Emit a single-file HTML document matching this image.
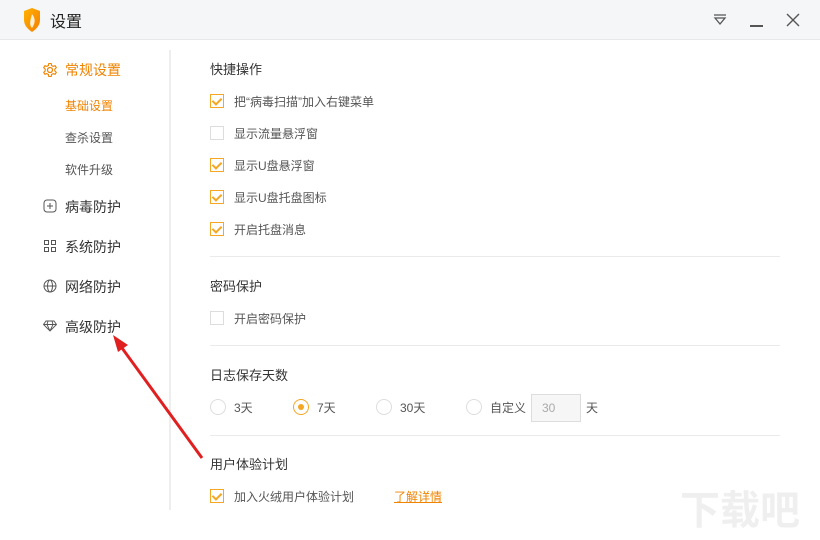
<!DOCTYPE html>
<html><head><meta charset="utf-8"><style>
*{margin:0;padding:0;box-sizing:border-box}
body{width:820px;height:540px;background:#fff;font-family:"Liberation Sans","Noto Sans CJK SC",sans-serif;position:relative;overflow:hidden;color:#333}
.a{position:absolute;white-space:nowrap}
.tb{position:absolute;left:0;top:0;width:820px;height:40px;background:#f5f6f7;border-bottom:1px solid #e8e8e8}
.cb{position:absolute;width:14px;height:14px;border:1px solid #ddd;background:#fff}
.cb.on{border-color:#f5a623}
.cb.on:after{content:"";position:absolute;left:3px;top:1px;width:4px;height:7px;border:solid #f5a623;border-width:0 2px 2px 0;transform:rotate(45deg)}
.lb{font-size:12px;color:#555}
.h{font-size:13px;color:#333}
.sep{position:absolute;left:210px;width:570px;height:1px;background:#eaeaea}
.rd{position:absolute;width:16px;height:16px;border:1px solid #ddd;border-radius:50%}
.rd.on{border-color:#f5a623}
.rd.on:after{content:"";position:absolute;left:4px;top:4px;width:6px;height:6px;border-radius:50%;background:#f5a623}
.side{font-size:14px;color:#333}
.sub{font-size:12px;color:#555}
</style></head><body>
<div class="tb"></div>
<svg class="a" style="left:22px;top:8px" width="20" height="24" viewBox="0 0 20 24"><defs><linearGradient id="g" x1="0" y1="0" x2="1" y2="1"><stop offset="0" stop-color="#ffb300"/><stop offset="1" stop-color="#f57c00"/></linearGradient></defs><path d="M2 3 L10 0 L18 3 L18 12 C18 18 13 22 10 24 C7 22 2 18 2 12Z" fill="url(#g)"/><path d="M10 6 C13 10 14 14 10 20 C7 17 8 13 10 6Z" fill="#fff" opacity=".85"/></svg>
<div class="a" style="left:50px;top:8px;font-size:16px;color:#222">设置</div>
<svg class="a" style="left:712px;top:13px" width="16" height="14"><path d="M2 2H14M3 5L8 11L13 5Z" stroke="#555" fill="none" stroke-width="1.3"/></svg>
<div class="a" style="left:750px;top:25px;width:13px;height:1.5px;background:#555"></div>
<svg class="a" style="left:786px;top:13px" width="14" height="14"><path d="M1 1L13 13M13 1L1 13" stroke="#555" stroke-width="1.4"/></svg>

<div class="a" style="left:169px;top:50px;width:2px;height:460px;background:#eeeeee"></div>
<svg class="a" style="left:42px;top:62px" width="16" height="16" viewBox="0 0 16 16"><circle cx="8" cy="8" r="2.5" fill="none" stroke="#f08300" stroke-width="1.3"/><path d="M6.8 1.5h2.4l.4 2 1.6.9 1.9-.7 1.2 2-1.5 1.4v1.8l1.5 1.4-1.2 2-1.9-.7-1.6.9-.4 2H6.8l-.4-2-1.6-.9-1.9.7-1.2-2 1.5-1.4V7.1L1.7 5.7l1.2-2 1.9.7 1.6-.9z" fill="none" stroke="#f08300" stroke-width="1.1"/></svg>
<div class="a side" style="left:65px;top:60px;color:#f08300">常规设置</div>
<div class="a sub" style="left:65px;top:97px;color:#f08300">基础设置</div>
<div class="a sub" style="left:65px;top:129px">查杀设置</div>
<div class="a sub" style="left:65px;top:161px">软件升级</div>
<svg class="a" style="left:43px;top:199px" width="14" height="14"><rect x="1" y="1" width="12" height="12" rx="3" fill="none" stroke="#555"/><path d="M7 4v6M4 7h6" stroke="#555"/></svg>
<div class="a side" style="left:65px;top:197px">病毒防护</div>
<svg class="a" style="left:43px;top:239px" width="14" height="14"><path d="M1.5 1.5h4v4h-4zM8.5 1.5h4v4h-4zM1.5 8.5h4v4h-4zM8.5 8.5h4v4h-4z" fill="none" stroke="#555"/></svg>
<div class="a side" style="left:65px;top:237px">系统防护</div>
<svg class="a" style="left:43px;top:279px" width="14" height="14"><circle cx="7" cy="7" r="6" fill="none" stroke="#555"/><ellipse cx="7" cy="7" rx="2.5" ry="6" fill="none" stroke="#555"/><path d="M1 7h12" stroke="#555"/></svg>
<div class="a side" style="left:65px;top:277px">网络防护</div>
<svg class="a" style="left:43px;top:320px" width="14" height="12"><path d="M3 1h8l2.5 3.5L7 11 .5 4.5zM.5 4.5h13M5 1L4 4.5 7 11M9 1l1 3.5L7 11" fill="none" stroke="#555" stroke-width=".9"/></svg>
<div class="a side" style="left:65px;top:317px">高级防护</div>

<div class="a h" style="left:210px;top:59px">快捷操作</div>
<div class="cb on" style="left:210px;top:94px"></div><div class="a lb" style="left:234px;top:93px">把“病毒扫描”加入右键菜单</div>
<div class="cb" style="left:210px;top:126px"></div><div class="a lb" style="left:234px;top:125px">显示流量悬浮窗</div>
<div class="cb on" style="left:210px;top:158px"></div><div class="a lb" style="left:234px;top:157px">显示U盘悬浮窗</div>
<div class="cb on" style="left:210px;top:190px"></div><div class="a lb" style="left:234px;top:189px">显示U盘托盘图标</div>
<div class="cb on" style="left:210px;top:222px"></div><div class="a lb" style="left:234px;top:221px">开启托盘消息</div>
<div class="sep" style="top:256px"></div>
<div class="a h" style="left:210px;top:276px">密码保护</div>
<div class="cb" style="left:210px;top:311px"></div><div class="a lb" style="left:234px;top:310px">开启密码保护</div>
<div class="sep" style="top:345px"></div>
<div class="a h" style="left:210px;top:365px">日志保存天数</div>
<div class="rd" style="left:210px;top:399px"></div><div class="a lb" style="left:234px;top:399px">3天</div>
<div class="rd on" style="left:293px;top:399px"></div><div class="a lb" style="left:317px;top:399px">7天</div>
<div class="rd" style="left:376px;top:399px"></div><div class="a lb" style="left:400px;top:399px">30天</div>
<div class="rd" style="left:466px;top:399px"></div><div class="a lb" style="left:490px;top:399px">自定义</div>
<div class="a" style="left:531px;top:394px;width:50px;height:28px;border:1px solid #ddd;background:#f6f6f6;font-size:12px;color:#aaa;padding:6px 0 0 10px">30</div>
<div class="a lb" style="left:586px;top:399px">天</div>
<div class="sep" style="top:435px"></div>
<div class="a h" style="left:210px;top:454px">用户体验计划</div>
<div class="cb on" style="left:210px;top:489px"></div><div class="a lb" style="left:234px;top:488px">加入火绒用户体验计划</div>
<div class="a lb" style="left:394px;top:488px;color:#f08300;text-decoration:underline">了解详情</div>

<svg class="a" style="left:0;top:0" width="820" height="540"><path d="M202 458L122 348" stroke="#e02020" stroke-width="3"/><path d="M113 335L128 345L118 352Z" fill="#e02020"/></svg>
<div class="a" style="left:680px;top:478px;font-size:40px;color:#000;opacity:.06;font-weight:bold">下载吧</div>
</body></html>
